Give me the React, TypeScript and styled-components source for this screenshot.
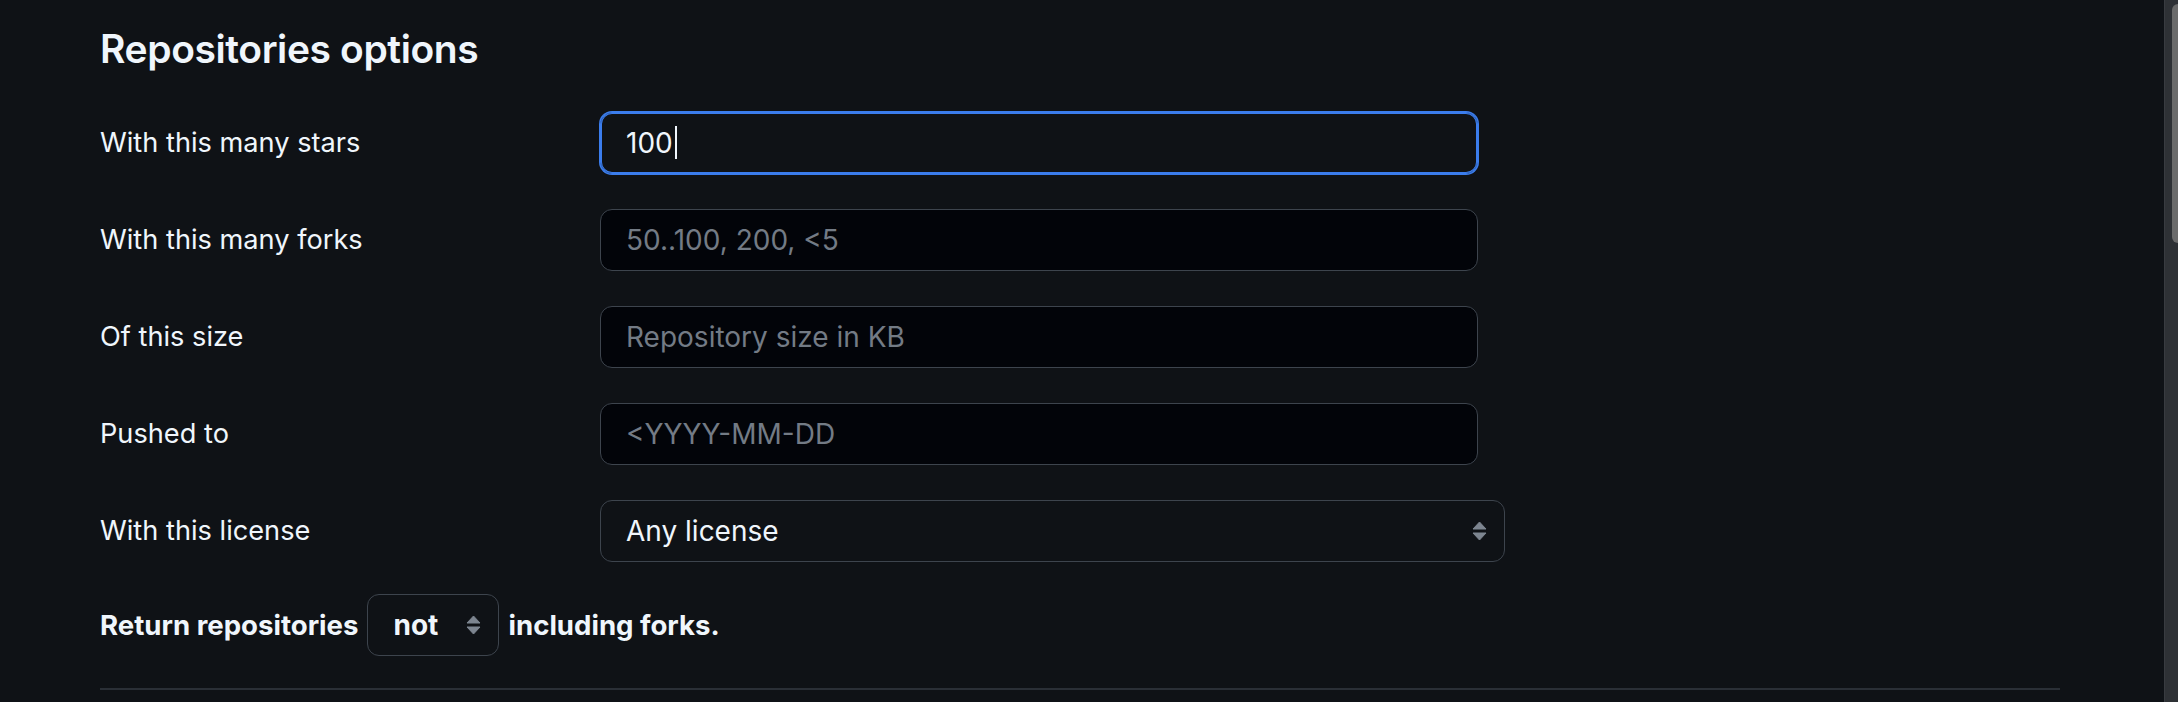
import React from "react";
import styled, { createGlobalStyle } from "styled-components";

const GlobalStyle = createGlobalStyle`
  html, body {
    margin: 0;
    padding: 0;
    background: #0f1216;
    overflow: hidden;
  }
  body {
    font-family: Inter, "Noto Sans", sans-serif;
    color: #f0f6fc;
  }
`;

const Page = styled.div`
  display: flex;
  height: 702px;
  background: #0f1216;
`;

const Main = styled.main`
  flex: 1;
  padding: 25px 104px 0 100px;
`;

const Heading = styled.h2`
  margin: 0;
  font-size: 39px;
  line-height: 48.75px;
  font-weight: 600;
  letter-spacing: -0.4px;
  color: #f0f6fc;
`;

const Form = styled.div`
  display: grid;
  grid-template-columns: 500px auto;
  row-gap: 35px;
  margin-top: 38px;
  align-items: center;
`;

const Label = styled.label`
  font-size: 27.2px;
  line-height: 34px;
  color: #f0f6fc;
`;

const Field = styled.div<{ $focused?: boolean; $width?: number }>`
  box-sizing: border-box;
  width: ${(p) => p.$width ?? 878}px;
  height: 62px;
  display: flex;
  align-items: center;
  padding: 0 25px;
  border: 1px solid ${(p) => (p.$focused ? "#3b7ded" : "#3d444d")};
  border-radius: 12px;
  background: ${(p) => (p.$focused ? "#0f1216" : "#020409")};
  box-shadow: ${(p) =>
    p.$focused ? "inset 0 0 0 1px #3b7ded, 0 0 0 1px #3b7ded" : "none"};
  font-size: 28px;
  color: #f0f6fc;
`;

const Placeholder = styled.span`
  color: #737b85;
`;

const Caret = styled.span`
  display: inline-block;
  width: 2px;
  height: 33px;
  margin-left: 2px;
  background: #f0f6fc;
`;

const Select = styled.div<{ $width: number; $bold?: boolean }>`
  box-sizing: border-box;
  width: ${(p) => p.$width}px;
  height: 62px;
  display: flex;
  align-items: center;
  justify-content: space-between;
  padding: 0 17px 0 25px;
  border: 1px solid #3d444d;
  border-radius: 12px;
  background: #0f1216;
  font-size: 28px;
  font-weight: ${(p) => (p.$bold ? 700 : 400)};
  color: #f0f6fc;
`;

const ReturnRow = styled.div`
  display: flex;
  align-items: center;
  margin-top: 32px;
  font-size: 27.6px;
  font-weight: 700;
  color: #f0f6fc;
`;

const InlineSelect = styled(Select)`
  margin: 0 9px;
`;

const Divider = styled.hr`
  margin: 32px 0 0;
  border: 0;
  height: 2px;
  background: #2a2f36;
`;

const ScrollTrack = styled.div`
  width: 14px;
  height: 702px;
  box-sizing: border-box;
  background: #2e3135;
  border-left: 1px solid #383b40;
  padding: 4px 0 0 7px;
  overflow: hidden;
`;

const ScrollThumb = styled.div`
  width: 12px;
  height: 239px;
  border-radius: 6px;
  background: #6b6b6b;
`;

const SelectArrows = () => (
  <svg width="15" height="20" viewBox="0 0 15 20" aria-hidden="true">
    <path d="M1 8 L7.5 1 L14 8 Z" fill="#7d8590" stroke="#7d8590" strokeWidth="1" strokeLinejoin="round" />
    <path d="M1 12 L14 12 L7.5 19 Z" fill="#7d8590" stroke="#7d8590" strokeWidth="1" strokeLinejoin="round" />
  </svg>
);

const rows: { label: string; placeholder?: string; value?: string }[] = [
  { label: "With this many stars", value: "100" },
  { label: "With this many forks", placeholder: "50..100, 200, <5" },
  { label: "Of this size", placeholder: "Repository size in KB" },
  { label: "Pushed to", placeholder: "<YYYY-MM-DD" },
];

export default function App() {
  return (
    <>
      <GlobalStyle />
      <Page>
        <Main>
          <Heading>Repositories options</Heading>
          <Form>
            {rows.map((r) => (
              <React.Fragment key={r.label}>
                <Label>{r.label}</Label>
                {r.value ? (
                  <Field $focused>
                    {r.value}
                    <Caret />
                  </Field>
                ) : (
                  <Field>
                    <Placeholder>{r.placeholder}</Placeholder>
                  </Field>
                )}
              </React.Fragment>
            ))}
            <Label>With this license</Label>
            <Select $width={905}>
              <span>Any license</span>
              <SelectArrows />
            </Select>
          </Form>
          <ReturnRow>
            <span>Return repositories</span>
            <InlineSelect $width={132} $bold>
              <span>not</span>
              <SelectArrows />
            </InlineSelect>
            <span>including forks.</span>
          </ReturnRow>
          <Divider />
        </Main>
        <ScrollTrack>
          <ScrollThumb />
        </ScrollTrack>
      </Page>
    </>
  );
}
